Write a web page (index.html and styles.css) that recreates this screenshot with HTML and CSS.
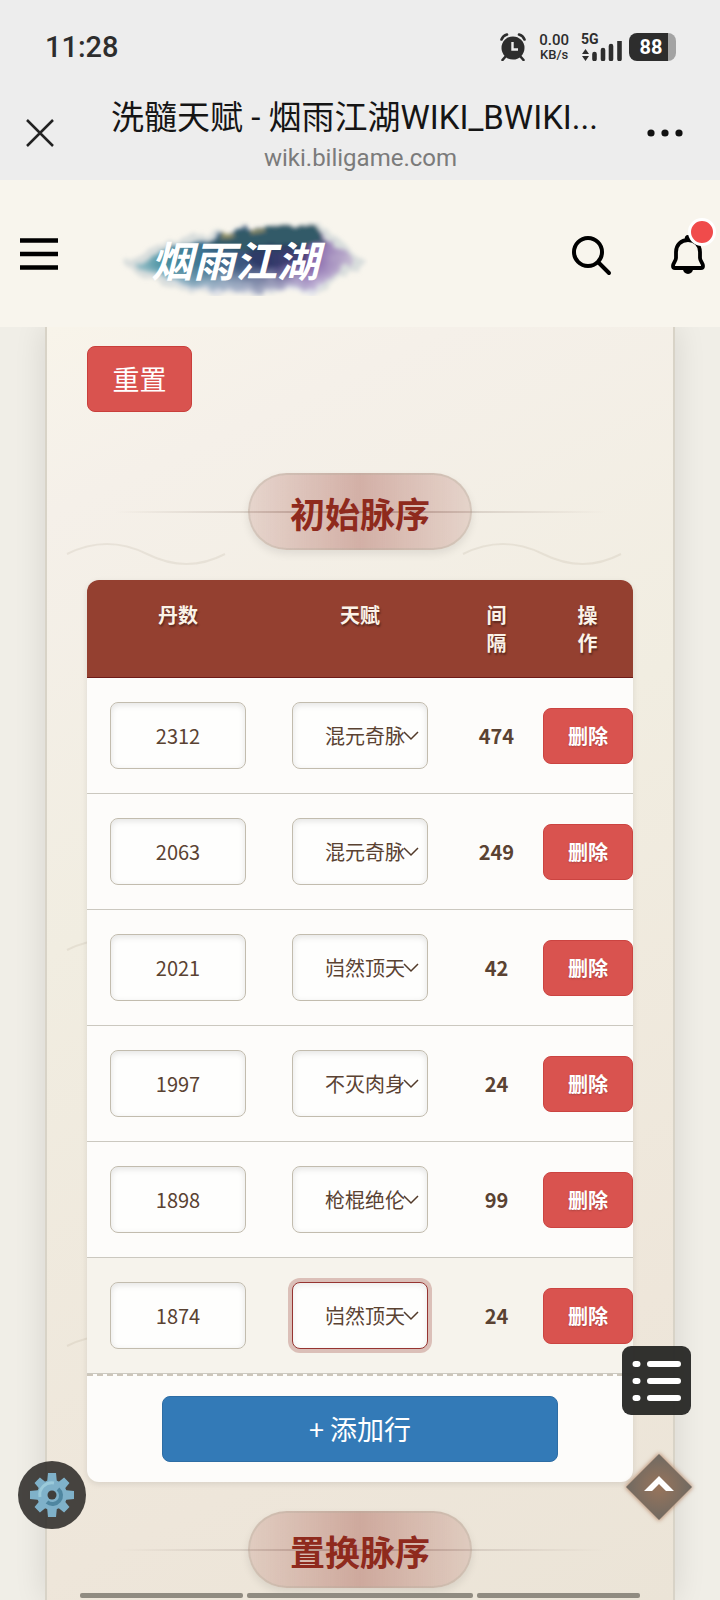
FILE: index.html
```html
<!DOCTYPE html>
<html lang="zh-CN">
<head>
<meta charset="utf-8">
<meta name="viewport" content="width=device-width, initial-scale=1">
<title>洗髓天赋 - 烟雨江湖WIKI_BWIKI</title>
<link rel="stylesheet" href="styles.css">
</head>
<body>
<div class="page">
  <div class="status">
    <span class="clock">11:28</span>
    <div class="status-icons">
      <svg class="alarm" width="26" height="28" viewBox="0 0 26 28" aria-hidden="true">
        <circle cx="13" cy="15" r="11.500" fill="#2d2d2d"/>
        <path d="M1.500 6.500Q3 2.500 7 1.500M24.500 6.500Q23 2.500 19 1.500M6 23l-3.500 4M20 23l3.500 4" stroke="#2d2d2d" stroke-width="2.600" fill="none" stroke-linecap="round"/>
        <path d="M12.500 9v7.500h5.500" stroke="#ededed" stroke-width="2.400" fill="none"/>
      </svg>
      <span class="speed"><span class="speed-num">0.00</span><span class="speed-unit">KB/s</span></span>
      <span class="signal">
        <span class="net">5G</span>
        <svg width="41" height="20" viewBox="0 0 41 20" aria-hidden="true">
          <path d="M1 13l3.500-5 3.500 5zM1 15l3.500 5 3.500-5z" fill="#2d2d2d"/>
          <path d="M13.500 13v5M22 9v9M30 5v13M38.500 0v18" stroke="#2d2d2d" stroke-width="4.600" stroke-linecap="round"/>
        </svg>
      </span>
      <span class="battery">88</span>
    </div>
  </div>

  <div class="browser-bar">
    <button class="icon-btn" aria-label="关闭"><svg width="30" height="30" viewBox="0 0 30 30"><path d="M2 2l26 26M28 2L2 28" stroke="#222" stroke-width="2.500"/></svg></button>
    <div class="title-block">
      <div class="page-title">洗髓天赋 - 烟雨江湖WIKI_BWIKI...</div>
      <div class="page-url">wiki.biligame.com</div>
    </div>
    <button class="icon-btn" aria-label="更多"><svg width="36" height="10" viewBox="0 0 36 10"><g fill="#111"><circle cx="4" cy="5" r="3.600"/><circle cx="18" cy="5" r="3.600"/><circle cx="32" cy="5" r="3.600"/></g></svg></button>
  </div>

  <header class="site-header">
    <button class="icon-btn" aria-label="菜单"><svg width="38" height="34" viewBox="0 0 38 34"><path d="M0 3.500h38M0 17h38M0 30.500h38" stroke="#000" stroke-width="4.600"/></svg></button>
    <a class="logo" href="#" aria-label="烟雨江湖">
      <svg width="250" height="76" viewBox="0 0 250 76">
        <defs>
          <linearGradient id="ink" x1="0" x2="1" y1="0" y2="0">
            <stop offset="0" stop-color="#a9c8cf"/><stop offset=".14" stop-color="#4b93a3"/>
            <stop offset=".35" stop-color="#3a6c8c"/><stop offset=".6" stop-color="#3a4474"/>
            <stop offset=".8" stop-color="#8160a8"/><stop offset="1" stop-color="#c8bed4"/>
          </linearGradient>
          <linearGradient id="mist" x1="0" x2="0" y1="0" y2="1">
            <stop offset=".55" stop-color="#fff" stop-opacity="0"/><stop offset="1" stop-color="#dfe0ee" stop-opacity=".75"/>
          </linearGradient>
          <filter id="rough" x="-10%" y="-20%" width="120%" height="140%">
            <feTurbulence type="fractalNoise" baseFrequency=".06" numOctaves="4" seed="4"/>
            <feDisplacementMap in="SourceGraphic" scale="14" xChannelSelector="R" yChannelSelector="G"/>
            <feGaussianBlur stdDeviation="2"/>
          </filter>
        </defs>
        <g filter="url(#rough)">
          <path d="M4 44Q45 18 92 14Q135 4 200 4Q216 14 248 42Q226 58 204 70Q130 76 70 72Q35 66 4 44Z" fill="#b9c5cc" opacity=".5"/>
          <path d="M14 44Q48 26 88 22Q110 8 140 6H194Q212 22 236 40Q214 62 194 68Q150 72 110 70Q60 70 14 44Z" fill="url(#ink)"/>
          <path d="M86 24Q120 6 150 6H196L208 24Q160 36 112 30Z" fill="#315a68"/>
          <path d="M130 28Q160 18 192 28L190 48Q160 44 130 48Z" fill="#26305d" opacity=".6"/>
          <path d="M14 44Q60 74 110 72H194Q214 62 236 40V14H14Z" fill="url(#mist)"/>
          <path d="M104 12h13v6h-13zM132 8h14v5h-14z" fill="#a49b62" opacity=".8"/>
        </g>
        <text class="logo-text" x="117" y="57" text-anchor="middle">烟雨江湖</text>
      </svg>
    </a>
    <button class="icon-btn search" aria-label="搜索"><svg width="42" height="42" viewBox="0 0 42 42" fill="none" stroke="#000" stroke-width="4"><circle cx="17" cy="17" r="14"/><path d="M27.500 27.500L38 38" stroke-linecap="round"/></svg></button>
    <button class="icon-btn bell" aria-label="通知"><svg width="36" height="42" viewBox="0 0 36 42"><path d="M18 1a3 3 0 0 1 3 4h-6a3 3 0 0 1 3-4zM13 35h10a5 5 0 0 1-10 0z" fill="#000"/><path d="M18 6c-7 0-12 5-12 12v6c0 3-3 5-3 8 0 1.500 1 2 2 2h26c1 0 2-.5 2-2 0-3-3-5-3-8v-6c0-7-5-12-12-12z" fill="none" stroke="#000" stroke-width="3.800"/></svg><span class="dot"></span></button>
  </header>

  <main class="content">
    <section class="panel">
      <svg class="waves" width="100%" height="100%" aria-hidden="true">
        <defs><pattern id="wave" width="396" height="396" patternUnits="userSpaceOnUse"><path d="M20 227Q60 207 100 227T178 227" fill="none" stroke="#8b8066" stroke-opacity=".12" stroke-width="2"/></pattern></defs>
        <rect width="100%" height="100%" fill="url(#wave)"/>
      </svg>
      <button class="reset">重置</button>
      <div class="heading"><h2>初始脉序</h2></div>
      <div class="card">
        <table>
          <thead><tr><th class="wide">丹数</th><th class="wide">天赋</th><th>间隔</th><th>操作</th></tr></thead>
          <tbody>
            <tr><td><input aria-label="丹数" value="2312"></td><td><select aria-label="天赋"><option>混元奇脉</option></select></td><td class="gap">474</td><td class="act"><button class="delete">删除</button></td></tr>
            <tr><td><input aria-label="丹数" value="2063"></td><td><select aria-label="天赋"><option>混元奇脉</option></select></td><td class="gap">249</td><td class="act"><button class="delete">删除</button></td></tr>
            <tr><td><input aria-label="丹数" value="2021"></td><td><select aria-label="天赋"><option>岿然顶天</option></select></td><td class="gap">42</td><td class="act"><button class="delete">删除</button></td></tr>
            <tr><td><input aria-label="丹数" value="1997"></td><td><select aria-label="天赋"><option>不灭肉身</option></select></td><td class="gap">24</td><td class="act"><button class="delete">删除</button></td></tr>
            <tr><td><input aria-label="丹数" value="1898"></td><td><select aria-label="天赋"><option>枪棍绝伦</option></select></td><td class="gap">99</td><td class="act"><button class="delete">删除</button></td></tr>
            <tr class="current"><td><input aria-label="丹数" value="1874"></td><td><select class="focused" aria-label="天赋"><option>岿然顶天</option></select></td><td class="gap">24</td><td class="act"><button class="delete">删除</button></td></tr>
          </tbody>
        </table>
        <div class="card-foot"><button class="add">+ 添加行</button></div>
      </div>
      <div class="heading next"><h2>置换脉序</h2></div>
    </section>
  </main>
</div>

<button class="float gear" aria-label="设置"><svg width="44" height="44" viewBox="-22 -22 44 44">
  <g fill="#7fb1c9"><circle r="15"/>
    <g id="teeth"><path d="M-4-22h8l1 10H-5zM-4 22h8l1-10H-5z"/><path d="M-22-4v8l10 1V-5zM22-4v8l-10 1V-5z"/></g>
    <use href="#teeth" transform="rotate(45) scale(.95)"/></g>
  <path d="M-12 2A12 12 0 0 1 2-12" fill="none" stroke="#9bcada" stroke-width="3"/>
  <path d="M-5 7A8 8 0 0 0 6-6" fill="none" stroke="#4f86a0" stroke-width="4"/>
  <circle r="4.500" fill="#403e3b"/></svg></button>
<button class="float toc" aria-label="目录"><svg width="50" height="42" viewBox="0 0 50 42"><path d="M3.500 4h2M3.500 21h2M3.500 38h2M18 4h28M18 21h28M18 38h28" stroke="#fff" stroke-width="6" stroke-linecap="round"/></svg></button>
<button class="float top" aria-label="返回顶部"><svg width="76" height="76" viewBox="-38 -38 76 76">
  <defs><radialGradient id="glow"><stop offset="0" stop-color="#98745b"/><stop offset="1" stop-color="#706a62"/></radialGradient><filter id="soft" x="-20%" y="-20%" width="140%" height="140%"><feGaussianBlur stdDeviation="2"/></filter></defs>
  <path d="M0-34L34 0 0 34-34 0z" fill="#b98d70" filter="url(#soft)"/><path d="M0-33L33 0 0 33-33 0z" fill="url(#glow)"/>
  <path d="M-15 4L0-11 15 4H7L0-3-7 4z" fill="#fff"/></svg></button>
<div class="bottom-tabs"><span></span><span class="mid"></span><span></span></div>
</body>
</html>
```
FILE: styles.css
```css
* { box-sizing: border-box; }
body {
  margin: 0;
  background: #f0eee7;
  font-family: "Noto Sans CJK SC", "Noto Sans", sans-serif;
  color: #5a4232;
}
button, input, select { font: inherit; color: inherit; margin: 0; }
button { cursor: pointer; }
.page { height: 100vh; display: flex; flex-direction: column; overflow: hidden; }

.status {
  flex: none;
  display: flex;
  justify-content: space-between;
  align-items: center;
  height: 88px;
  padding: 6px 44px 0 45px;
  background: #ededed;
  color: #2d2d2d;
  font-family: Roboto, sans-serif;
  font-weight: 500;
}
.clock { font-size: 29px; }
.status-icons { display: flex; align-items: center; }
.speed { display: flex; flex-direction: column; align-items: center; margin: 0 12px 0 13px; }
.speed-num { font-size: 15px; line-height: 15px; }
.speed-unit { font-size: 13px; line-height: 14px; }
.signal { display: flex; flex-direction: column; height: 28px; margin-right: 7px; }
.net { font-size: 14px; line-height: 12px; height: 8px; font-weight: 700; }
.battery {
  width: 47px;
  height: 28px;
  padding-right: 3px;
  border-radius: 8px;
  background: linear-gradient(90deg, #2d2d2d 39px, #a3a3a3 39px);
  color: #fff;
  font-size: 20px;
  font-weight: 700;
  line-height: 28px;
  text-align: center;
}

.browser-bar {
  flex: none;
  display: flex;
  align-items: center;
  justify-content: space-between;
  padding: 2px 37px 4px 25px;
  background: #ededed;
}
.icon-btn { display: block; flex: none; padding: 0; border: 0; background: none; position: relative; }
.icon-btn svg { display: block; }
.title-block {
  flex: 1;
  min-width: 0;
  margin: 0 37px 0 56px;
  font-family: Roboto, "Noto Sans CJK SC", sans-serif;
  white-space: nowrap;
}
.page-title { font-size: 33px; line-height: 56px; color: #151515; overflow: hidden; text-overflow: ellipsis; }
.page-url { font-size: 24px; line-height: 24px; padding-bottom: 6px; color: #7b7b7b; text-align: center; }

.site-header {
  flex: none;
  display: flex;
  align-items: center;
  height: 147px;
  padding: 0 14px 0 20px;
  background: #f8f5ed;
}
.logo { display: block; margin-left: 60px; padding-top: 8px; }
.logo svg { display: block; }
.logo-text { font-size: 42px; font-weight: 700; font-style: italic; fill: #fff; }
.search { margin-left: auto; margin-right: 57px; padding-top: 4px; }
.bell { padding-top: 2px; }
.dot {
  position: absolute;
  top: -14px;
  left: 18px;
  width: 28px;
  height: 28px;
  border: 3px solid #fff;
  border-radius: 50%;
  background: #f04b4b;
}

.content { flex: 1; min-height: 0; padding: 0 45px; overflow: hidden; }
.panel {
  position: relative;
  min-height: 100%;
  padding: 19px 40px 12px;
  border: solid #d8d3c7;
  border-width: 0 2px;
  background: linear-gradient(155deg, #f8f4ea 0%, #f5f0e9 12%, #f1ede1 40%, #eee6da 80%, #ebe4d7 100%);
  box-shadow: 0 0 30px #0000001c;
}
.waves { position: absolute; top: 0; left: 0; }
.reset, .heading, .card { position: relative; }
.reset {
  display: block;
  width: 105px;
  height: 66px;
  padding: 0 0 2px;
  border: 1px solid #c93f3b;
  border-radius: 8px;
  background: #d9534f;
  color: #fff;
  font-size: 27px;
}
.heading {
  display: flex;
  justify-content: center;
  margin: 61px 0 30px;
  background: linear-gradient(90deg, transparent 5%, #c4b8ae 50%, transparent 95%) center / 100% 2px no-repeat;
}
.next { margin: 29px 0 0; }
h2 {
  margin: 0;
  padding: 2px 40px 0;
  border: 2px solid #b0a89850;
  border-radius: 40px;
  background: linear-gradient(90deg, #8b251a22, #8b251a50 50%, #8b251a22);
  box-shadow: 0 4px 8px #00000016;
  color: #8f2a1d;
  font-size: 35px;
  font-weight: 700;
  line-height: 71px;
}
.card {
  overflow: hidden;
  border-radius: 12px;
  background: #fdfcfa;
  box-shadow: 0 2px 6px #00000018;
}
table { width: 100%; table-layout: fixed; border-collapse: separate; border-spacing: 0; font-size: 20px; }
th {
  padding: 21px 28px 20px;
  border-bottom: 1px solid #6e1b18;
  background: #944030;
  color: #fbf3e8;
  font-weight: 700;
  line-height: 28px;
  vertical-align: top;
  text-shadow: 1px 2px 2px #00000066;
}
th.wide { width: 33.333%; }
td {
  height: 116px;
  padding: 0 23px;
  border-bottom: 1px solid #cbc8bf;
  text-align: center;
  vertical-align: middle;
}
.gap { padding: 0; font-weight: 700; }
.act { padding: 0 0 0 1px; }
.current td { background: #f6f3ec; }
input, select {
  display: block;
  width: 100%;
  height: 67px;
  border: 1px solid #c2bcae;
  border-radius: 8px;
  background: #fefefd;
  box-shadow: inset 0 2px 6px #0000001c;
  text-align: center;
  outline: none;
}
select {
  appearance: none;
  padding: 0 16px 0 32px;
  text-align: left;
  background: #fefefd url("data:image/svg+xml,%3Csvg xmlns='http://www.w3.org/2000/svg' width='16' height='10'%3E%3Cpath d='M1 1l7 7 7-7' fill='none' stroke='%23523a2a' stroke-width='1.500'/%3E%3C/svg%3E") right 8px center no-repeat;
}
select.focused { border-color: #963431; box-shadow: 0 0 0 4px #8b251a40, inset 0 2px 6px #00000014; }
.delete {
  width: 90px;
  height: 56px;
  padding: 0;
  border: 1px solid #cb4441;
  border-radius: 8px;
  background: #d9534f;
  color: #fff;
  font-weight: 700;
  text-shadow: 0 1px 2px #00000033;
}
.card-foot { padding: 20px 75px; border-top: 2px dashed #cdc6ba; }
.add {
  display: block;
  width: 100%;
  height: 66px;
  padding: 0 0 2px;
  border: 1px solid #2e6da4;
  border-radius: 8px;
  background: #337ab7;
  color: #fff;
  font-size: 27px;
}

.float { position: fixed; display: grid; place-items: center; padding: 0; border: 0; }
.float svg { display: block; }
.gear { left: 18px; bottom: 71px; width: 68px; height: 68px; border-radius: 50%; background: #282623d9; }
.toc { right: 29px; bottom: 185px; width: 69px; height: 69px; border-radius: 9px; background: #2b2b29f8; }
.top { right: 23px; bottom: 75px; background: none; }
.bottom-tabs {
  position: fixed;
  left: 80px;
  right: 80px;
  bottom: 2px;
  display: grid;
  grid-template-columns: 163fr 226fr 163fr;
  gap: 4px;
}
.bottom-tabs span { height: 5px; border-radius: 2px; background: #908b81; }
```
